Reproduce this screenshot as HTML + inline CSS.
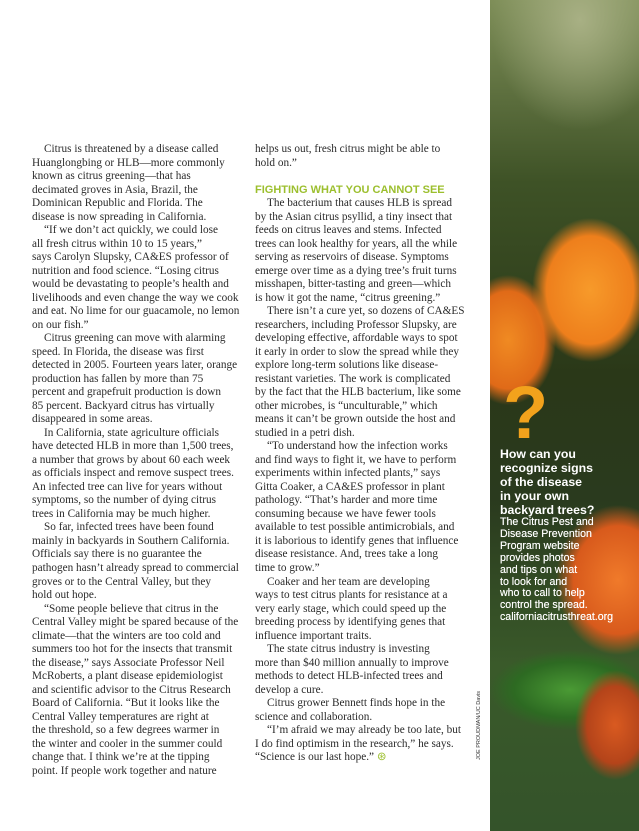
<!DOCTYPE html>
<html><head><meta charset="utf-8"><style>
body{margin:0;width:639px;height:831px;background:#fff;position:relative;overflow:hidden;font-family:"Liberation Serif",serif;color:#2a2a2a}
.col{position:absolute;top:143px;font-size:11.25px;line-height:13.52px;white-space:nowrap}
.col div{height:13.52px}
.i{text-indent:12px}
h3{margin:0;font-family:"Liberation Sans",sans-serif;font-size:11px;color:#9cbf2e;font-weight:bold;height:13.52px;line-height:13.52px}
.photo{position:absolute;left:490px;top:0;width:149px;height:831px;overflow:hidden;
background:
radial-gradient(ellipse 58px 72px at 100px 290px,#f79a2a 0%,#ee7f1c 75%,rgba(220,100,20,0) 100%),
radial-gradient(ellipse 48px 65px at 18px 340px,#f08a22 0%,#e06a18 75%,rgba(200,80,20,0) 100%),
radial-gradient(ellipse 62px 75px at 128px 580px,#f07a2a 0%,#d85a1c 72%,rgba(200,70,20,0) 100%),
radial-gradient(ellipse 40px 55px at 125px 725px,#d95a20 0%,#b4441a 70%,rgba(160,60,20,0) 100%),
radial-gradient(ellipse 80px 40px at 80px 690px,#4a9a34 0%,#2d6a22 70%,rgba(40,90,30,0) 100%),
radial-gradient(ellipse 90px 110px at 90px 20px,#a8b084 0%,rgba(120,130,80,0) 100%),
linear-gradient(180deg,#7e8e58 0%,#3e5226 22%,#2a3818 45%,#2a3a1e 60%,#3a5a2a 80%,#34532a 100%)}
.q{position:absolute;left:503px;top:376px;font-family:"Liberation Sans",sans-serif;font-weight:bold;font-size:74px;color:#f2a21c;line-height:1}
.side{position:absolute;left:500px;font-family:"Liberation Sans",sans-serif;color:#fff;white-space:nowrap}
.credit{position:absolute;left:476px;top:760px;transform:rotate(-90deg);transform-origin:0 0;font-family:"Liberation Sans",sans-serif;font-size:5.5px;color:#333;white-space:nowrap}
</style></head><body>
<div class="col" style="left:32px">
<div class="i">Citrus is threatened by a disease called</div>
<div>Huanglongbing or HLB—more commonly</div>
<div>known as citrus greening—that has</div>
<div>decimated groves in Asia, Brazil, the</div>
<div>Dominican Republic and Florida. The</div>
<div>disease is now spreading in California.</div>
<div class="i">“If we don’t act quickly, we could lose</div>
<div>all fresh citrus within 10 to 15 years,”</div>
<div>says Carolyn Slupsky, CA&amp;ES professor of</div>
<div>nutrition and food science. “Losing citrus</div>
<div>would be devastating to people’s health and</div>
<div>livelihoods and even change the way we cook</div>
<div>and eat. No lime for our guacamole, no lemon</div>
<div>on our fish.”</div>
<div class="i">Citrus greening can move with alarming</div>
<div>speed. In Florida, the disease was first</div>
<div>detected in 2005. Fourteen years later, orange</div>
<div>production has fallen by more than 75</div>
<div>percent and grapefruit production is down</div>
<div>85 percent. Backyard citrus has virtually</div>
<div>disappeared in some areas.</div>
<div class="i">In California, state agriculture officials</div>
<div>have detected HLB in more than 1,500 trees,</div>
<div>a number that grows by about 60 each week</div>
<div>as officials inspect and remove suspect trees.</div>
<div>An infected tree can live for years without</div>
<div>symptoms, so the number of dying citrus</div>
<div>trees in California may be much higher.</div>
<div class="i">So far, infected trees have been found</div>
<div>mainly in backyards in Southern California.</div>
<div>Officials say there is no guarantee the</div>
<div>pathogen hasn’t already spread to commercial</div>
<div>groves or to the Central Valley, but they</div>
<div>hold out hope.</div>
<div class="i">“Some people believe that citrus in the</div>
<div>Central Valley might be spared because of the</div>
<div>climate—that the winters are too cold and</div>
<div>summers too hot for the insects that transmit</div>
<div>the disease,” says Associate Professor Neil</div>
<div>McRoberts, a plant disease epidemiologist</div>
<div>and scientific advisor to the Citrus Research</div>
<div>Board of California. “But it looks like the</div>
<div>Central Valley temperatures are right at</div>
<div>the threshold, so a few degrees warmer in</div>
<div>the winter and cooler in the summer could</div>
<div>change that. I think we’re at the tipping</div>
<div>point. If people work together and nature</div>
</div>
<div class="col" style="left:255px">
<div>helps us out, fresh citrus might be able to</div>
<div>hold on.”</div>
<div></div>
<h3>FIGHTING WHAT YOU CANNOT SEE</h3>
<div class="i">The bacterium that causes HLB is spread</div>
<div>by the Asian citrus psyllid, a tiny insect that</div>
<div>feeds on citrus leaves and stems. Infected</div>
<div>trees can look healthy for years, all the while</div>
<div>serving as reservoirs of disease. Symptoms</div>
<div>emerge over time as a dying tree’s fruit turns</div>
<div>misshapen, bitter-tasting and green—which</div>
<div>is how it got the name, “citrus greening.”</div>
<div class="i">There isn’t a cure yet, so dozens of CA&amp;ES</div>
<div>researchers, including Professor Slupsky, are</div>
<div>developing effective, affordable ways to spot</div>
<div>it early in order to slow the spread while they</div>
<div>explore long-term solutions like disease-</div>
<div>resistant varieties. The work is complicated</div>
<div>by the fact that the HLB bacterium, like some</div>
<div>other microbes, is “unculturable,” which</div>
<div>means it can’t be grown outside the host and</div>
<div>studied in a petri dish.</div>
<div class="i">“To understand how the infection works</div>
<div>and find ways to fight it, we have to perform</div>
<div>experiments within infected plants,” says</div>
<div>Gitta Coaker, a CA&amp;ES professor in plant</div>
<div>pathology. “That’s harder and more time</div>
<div>consuming because we have fewer tools</div>
<div>available to test possible antimicrobials, and</div>
<div>it is laborious to identify genes that influence</div>
<div>disease resistance. And, trees take a long</div>
<div>time to grow.”</div>
<div class="i">Coaker and her team are developing</div>
<div>ways to test citrus plants for resistance at a</div>
<div>very early stage, which could speed up the</div>
<div>breeding process by identifying genes that</div>
<div>influence important traits.</div>
<div class="i">The state citrus industry is investing</div>
<div>more than $40 million annually to improve</div>
<div>methods to detect HLB-infected trees and</div>
<div>develop a cure.</div>
<div class="i">Citrus grower Bennett finds hope in the</div>
<div>science and collaboration.</div>
<div class="i">“I’m afraid we may already be too late, but</div>
<div>I do find optimism in the research,” he says.</div>
<div>“Science is our last hope.” <span style="color:#9cbf2e">⊛</span></div>
</div>
<div class="photo"></div>
<div class="q">?</div>
<div class="side" style="top:447px;font-size:12.3px;font-weight:bold;line-height:14px">How can you<br>recognize signs<br>of the disease<br>in your own<br>backyard trees?</div>
<div class="side" style="top:517px;font-size:10.6px;line-height:11.9px;text-shadow:0 0 0.4px #fff">The Citrus Pest and<br>Disease Prevention<br>Program website<br>provides photos<br>and tips on what<br>to look for and<br>who to call to help<br>control the spread.<br>californiacitrusthreat.org</div>
<div class="credit">JOE PROUDMAN/UC Davis</div>
</body></html>
